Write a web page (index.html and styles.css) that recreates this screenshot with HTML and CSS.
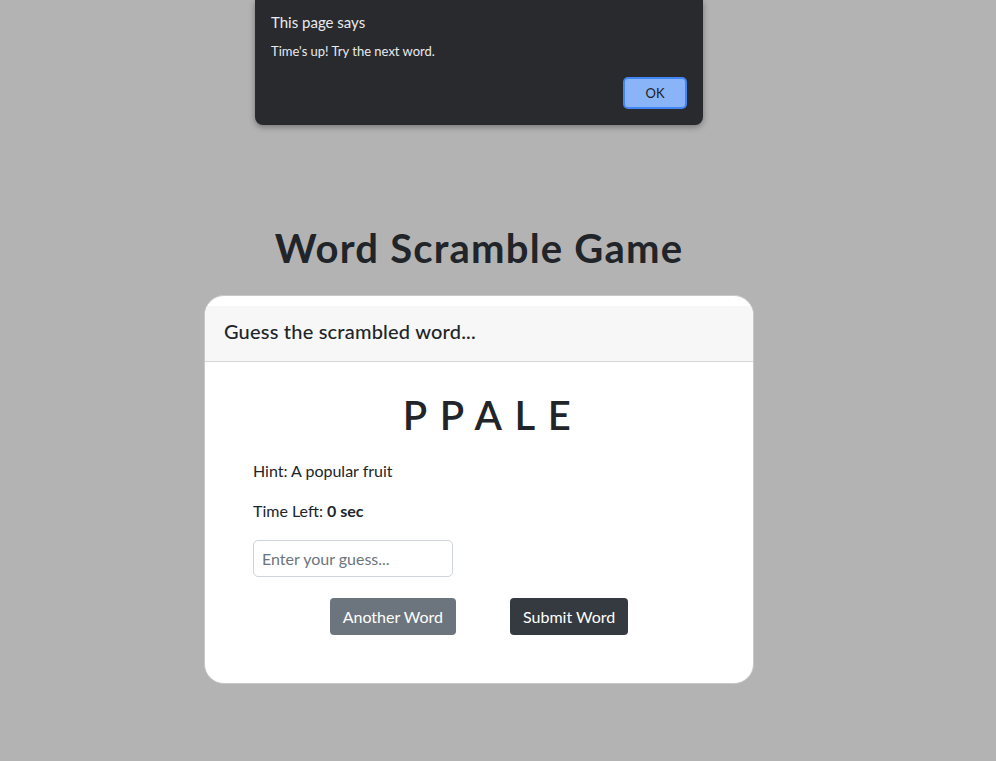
FILE: index.html
```html
<!DOCTYPE html>
<html lang="en">
<head>
    <meta charset="UTF-8">
    <meta name="viewport" content="width=device-width, initial-scale=1.0">
    <title>Word Scramble Game</title>
    <link rel="stylesheet" href="styles.css">
</head>
<body>
    <div class="page">
        <div class="alert-box">
            <div class="alert-title">This page says</div>
            <div class="alert-text">Time's up! Try the next word.</div>
            <div class="alert-actions">
                <button class="alert-ok">OK</button>
            </div>
        </div>

        <h1>Word Scramble Game</h1>

        <div class="card">
            <div class="card-header">Guess the scrambled word...</div>
            <div class="card-body">
                <div class="word">PPALE</div>
                <p>Hint: A popular fruit</p>
                <p>Time Left: <strong>0 sec</strong></p>
                <input type="text" class="guess" placeholder="Enter your guess...">
                <div class="buttons">
                    <button class="btn btn-gray">Another Word</button>
                    <button class="btn btn-dark">Submit Word</button>
                </div>
            </div>
        </div>
    </div>
</body>
</html>
```

FILE: styles.css
```css
body {
    margin: 0;
    background-color: #b3b3b3;
    font-family: Lato, "Open Sans", sans-serif;
    color: #212529;
    height: 761px;
    overflow: hidden;
}
.page {
    width: 958px;
    position: relative;
    padding-top: 224px;
}
h1 {
    margin: 0 0 23px;
    text-align: center;
    font-size: 40px;
    line-height: 48px;
    font-weight: 700;
    letter-spacing: 1.2px;
    color: #212529;
}
.card {
    width: 550px;
    margin: 0 auto;
    box-sizing: border-box;
    background: white;
    border: 1px solid #c8c8c8;
    border-radius: 20px;
    padding-top: 10px;
    overflow: hidden;
}
.card-header {
    background-color: #f7f7f7;
    border-bottom: 1px solid #d6d6d6;
    padding: 0 19px;
    height: 55px;
    line-height: 50px;
    font-size: 20px;
    font-weight: 500;
    letter-spacing: 0.2px;
}
.card-body {
    padding: 29px 48px 48px;
}
.word {
    text-align: center;
    font-size: 40px;
    line-height: 48px;
    letter-spacing: 12.5px;
    padding-left: 28px;
    font-weight: 600;
    margin-bottom: 20px;
}
p {
    margin: 0 0 16px;
    font-size: 16px;
    line-height: 24px;
}
.guess {
    display: block;
    width: 200px;
    height: 37px;
    box-sizing: border-box;
    padding: 6px 8px;
    border: 1px solid #ced4da;
    border-radius: 5px;
    font-family: inherit;
    font-size: 16px;
    margin-top: 17px;
}
.guess::placeholder {
    color: #6c757d;
}
.buttons {
    display: flex;
    justify-content: center;
    gap: 54px;
    margin-top: 21px;
}
.btn {
    height: 37px;
    padding: 0 13px;
    border: none;
    border-radius: 4px;
    color: white;
    font-family: inherit;
    font-size: 16px;
}
.btn-gray {
    background-color: #6c757d;
}
.btn-dark {
    background-color: #343a40;
}
.alert-box {
    position: absolute;
    top: 0;
    left: 255px;
    width: 448px;
    height: 125px;
    box-sizing: border-box;
    background-color: #292a2d;
    border-radius: 0 0 8px 8px;
    box-shadow: 0 2px 6px rgba(0,0,0,0.35);
    padding: 12px 16px 0;
    color: #e8eaed;
}
.alert-title {
    font-size: 15px;
    line-height: 20px;
}
.alert-text {
    font-size: 13px;
    line-height: 18px;
    margin-top: 10px;
}
.alert-actions {
    display: flex;
    justify-content: flex-end;
    margin-top: 17px;
}
.alert-ok {
    width: 64px;
    height: 32px;
    background-color: #8ab4f8;
    border: 2px solid #4285f4;
    border-radius: 5px;
    color: #202124;
    font-family: inherit;
    font-size: 13px;
}
```
